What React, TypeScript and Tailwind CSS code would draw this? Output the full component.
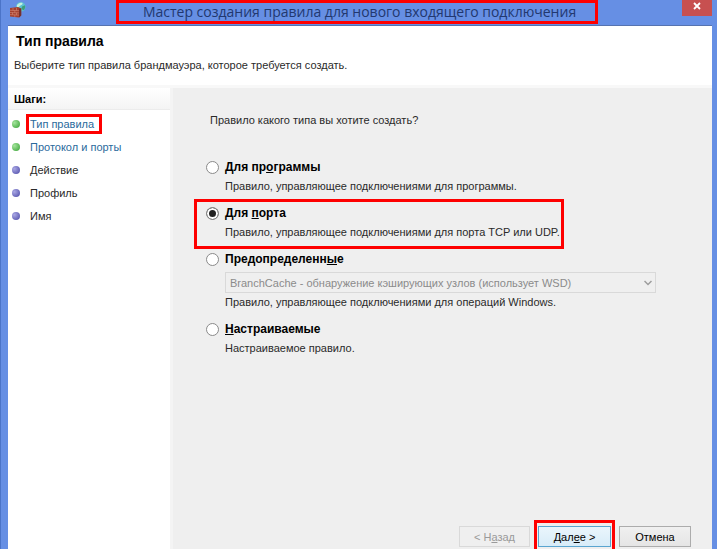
import { useState } from 'react';
import type { ReactNode } from 'react';

type Step = {
  name: string;
  linked: boolean;
  marked?: boolean;
};

type RuleOption = {
  id: string;
  label: ReactNode;
  description: string;
  profiles?: string[];
  marked?: boolean;
};

const steps: Step[] = [
  { name: 'Тип правила', linked: true, marked: true },
  { name: 'Протокол и порты', linked: true },
  { name: 'Действие', linked: false },
  { name: 'Профиль', linked: false },
  { name: 'Имя', linked: false },
];

const options: RuleOption[] = [
  {
    id: 'program',
    label: <>Для пр<u>о</u>граммы</>,
    description: 'Правило, управляющее подключениями для программы.',
  },
  {
    id: 'port',
    label: <>Для <u>п</u>орта</>,
    description: 'Правило, управляющее подключениями для порта TCP или UDP.',
    marked: true,
  },
  {
    id: 'predefined',
    label: <>Предопределенн<u>ы</u>е</>,
    description: 'Правило, управляющее подключениями для операций Windows.',
    profiles: ['BranchCache - обнаружение кэширующих узлов (использует WSD)'],
  },
  {
    id: 'custom',
    label: <><u>Н</u>астраиваемые</>,
    description: 'Настраиваемое правило.',
  },
];

function FirewallIcon() {
  return (
    <svg className="h-4 w-4 shrink-0" viewBox="0 0 16 16" aria-hidden="true">
      <circle cx="10.8" cy="4.8" r="4.8" fill="#5cc0d2" />
      <path d="M6.8 3.5C8 1 10.5.3 12.5 1c.3 1.5-1 2-2 2.5-1 .8-2 2.500-3.500 2z" fill="#c4f0df" />
      <path d="M12 4.500l3-1.200c.5 2 0 3.700-1.500 5L11.500 7z" fill="#3d9e7a" />
      <path d="M0 6l8-1 3.200 1.500v7L9 15.500 0 14.500z" fill="#a5402f" />
      <path d="M9 6.800l2.200-.3v7L9 15.500z" fill="#74302c" />
      <path
        d="M0 8.300l9 .4M0 10.500l9 .4M0 12.600l9 .5M3 6v2.500M6.500 6v2.500M4.800 8.500v2.200M2.500 10.500v2.200M6.500 10.700v2.200M4.800 12.800v2.200"
        stroke="#d58b78"
        strokeWidth="0.6"
      />
    </svg>
  );
}

function StepDot({ linked }: { linked: boolean }) {
  return (
    <span
      className={`h-2 w-2 shrink-0 rounded-full bg-radial-[at_30%_35%] ${
        linked ? 'from-[#a4e49c] to-[#35a032]' : 'from-[#a9a7e4] to-[#4a48a6]'
      }`}
    />
  );
}

export default function App() {
  const [selected, setSelected] = useState('port');

  return (
    <div className="flex h-screen flex-col overflow-hidden border-r-4 border-l border-r-[#668fe4] border-l-[#4b74c8] bg-[#668fe4] pr-px pl-[7px] font-['Liberation_Sans',Arial,sans-serif] text-[11px] leading-[18px] text-[#2a2a2a]">
      {/* Title bar */}
      <header className="flex h-[25px] shrink-0 items-start">
        <div className="flex flex-1 pt-0.5 pl-0.5">
          <FirewallIcon />
        </div>
        <h1 className="mr-2 flex h-6 items-center border-[3px] border-[#fe0000] pr-[19px] pl-6 font-['Open_Sans',sans-serif] text-[14px] whitespace-nowrap text-[#22386f]">
          Мастер создания правила для нового входящего подключения
        </h1>
        <div className="flex flex-1 justify-end">
          <button
            type="button"
            aria-label="Закрыть"
            className="flex h-4 w-[30px] items-center justify-center bg-[#c75050] pb-1 text-white"
          >
            <svg className="h-2 w-2" viewBox="0 0 8 8" fill="none" stroke="currentColor" strokeWidth="1.8">
              <path d="M1 1l6 6M7 1L1 7" />
            </svg>
          </button>
        </div>
      </header>

      {/* Page heading */}
      <section className="h-[60px] shrink-0 border-t border-[#5673b0] bg-white pt-1.5">
        <h2 className="pl-2 text-[14px] font-bold text-black">Тип правила</h2>
        <p className="mt-1.5 pl-1.5">Выберите тип правила брандмауэра, которое требуется создать.</p>
      </section>

      <div className="flex min-h-0 flex-1 border-t-[3px] border-[#f8f8f8]">
        {/* Steps */}
        <nav className="w-[165px] shrink-0 border-r-[3px] border-[#f4f4f4] bg-white">
          <h3 className="flex h-[22px] items-center border-b border-[#ececec] bg-linear-to-b from-white to-[#f4f4f4] pl-1.5 font-bold text-black">
            Шаги:
          </h3>
          <ol className="pt-0.5">
            {steps.map((step) => (
              <li key={step.name} className="flex h-[23px] items-center gap-2.5 pl-1">
                <StepDot linked={step.linked} />
                {step.linked ? (
                  <a href="#" className="relative text-[#2a6a9c]">
                    {step.name}
                    {step.marked && (
                      <span className="pointer-events-none absolute -inset-y-px -right-2 -left-1 border-[3px] border-[#fe0000]" />
                    )}
                  </a>
                ) : (
                  <span>{step.name}</span>
                )}
              </li>
            ))}
          </ol>
        </nav>

        <main className="flex min-w-0 flex-1 flex-col bg-[#efefef]">
          <form className="flex flex-1 flex-col px-[33px] pt-[23px]">
            <p className="pl-1">Правило какого типа вы хотите создать?</p>

            <div className="mt-7 flex flex-col items-start gap-2">
              {options.map((option) => (
                <div key={option.id} className="relative max-w-full">
                  <label className="flex h-5 items-center gap-1.5 text-[12px] font-bold text-black">
                    <input
                      type="radio"
                      name="rule"
                      value={option.id}
                      checked={selected === option.id}
                      onChange={() => setSelected(option.id)}
                      className="h-[13px] w-[13px] appearance-none rounded-full border border-[#8a8a8a] bg-white checked:bg-[#222] checked:shadow-[inset_0_0_0_2px_white]"
                    />
                    <span>{option.label}</span>
                  </label>
                  {option.profiles && (
                    <div className="relative mt-[3px] ml-[19px] max-w-full">
                      <select
                        disabled
                        aria-label="Предопределенные правила"
                        className="block h-[21px] w-[431px] max-w-full appearance-none border border-[#d9d9d9] bg-[#efefef] pl-1 text-[11px] leading-[18px] text-[#8b8b8b]"
                      >
                        {option.profiles.map((profile) => (
                          <option key={profile}>{profile}</option>
                        ))}
                      </select>
                      <svg
                        className="pointer-events-none absolute top-2 right-1 h-1.5 w-2"
                        viewBox="0 0 8 6"
                        fill="none"
                        stroke="#9c9c9c"
                        strokeWidth="1.5"
                      >
                        <path d="M0.5 1L4 4.5L7.5 1" />
                      </svg>
                    </div>
                  )}
                  <p className="pl-[19px]">{option.description}</p>
                  {option.marked && (
                    <span className="pointer-events-none absolute -top-1 -right-1 -bottom-2 -left-3 border-[3px] border-[#fe0000]" />
                  )}
                </div>
              ))}
            </div>
          </form>

          <footer className="flex shrink-0 justify-end gap-2 pr-[21px] pb-0.5">
            <button
              type="button"
              disabled
              className="h-[21px] w-[71px] border border-[#d9d9d9] bg-[#efefef] text-[#9a9a9a]"
            >
              &lt; Н<u>а</u>зад
            </button>
            <div className="relative">
              <button
                type="button"
                className="block h-[21px] w-[73px] border border-[#5aa5d0] bg-linear-to-b from-[#eaf5fc] to-[#d8ecf8] text-black"
              >
                Дал<u>е</u>е &gt;
              </button>
              <span className="pointer-events-none absolute -inset-x-1 -top-1.5 -bottom-1.5 border-[3px] border-[#fe0000]" />
            </div>
            <button
              type="button"
              className="h-[21px] w-[72px] border border-[#acacac] bg-linear-to-b from-[#f0f0f0] to-[#e5e5e5] text-black"
            >
              Отмена
            </button>
          </footer>
        </main>
      </div>
    </div>
  );
}
